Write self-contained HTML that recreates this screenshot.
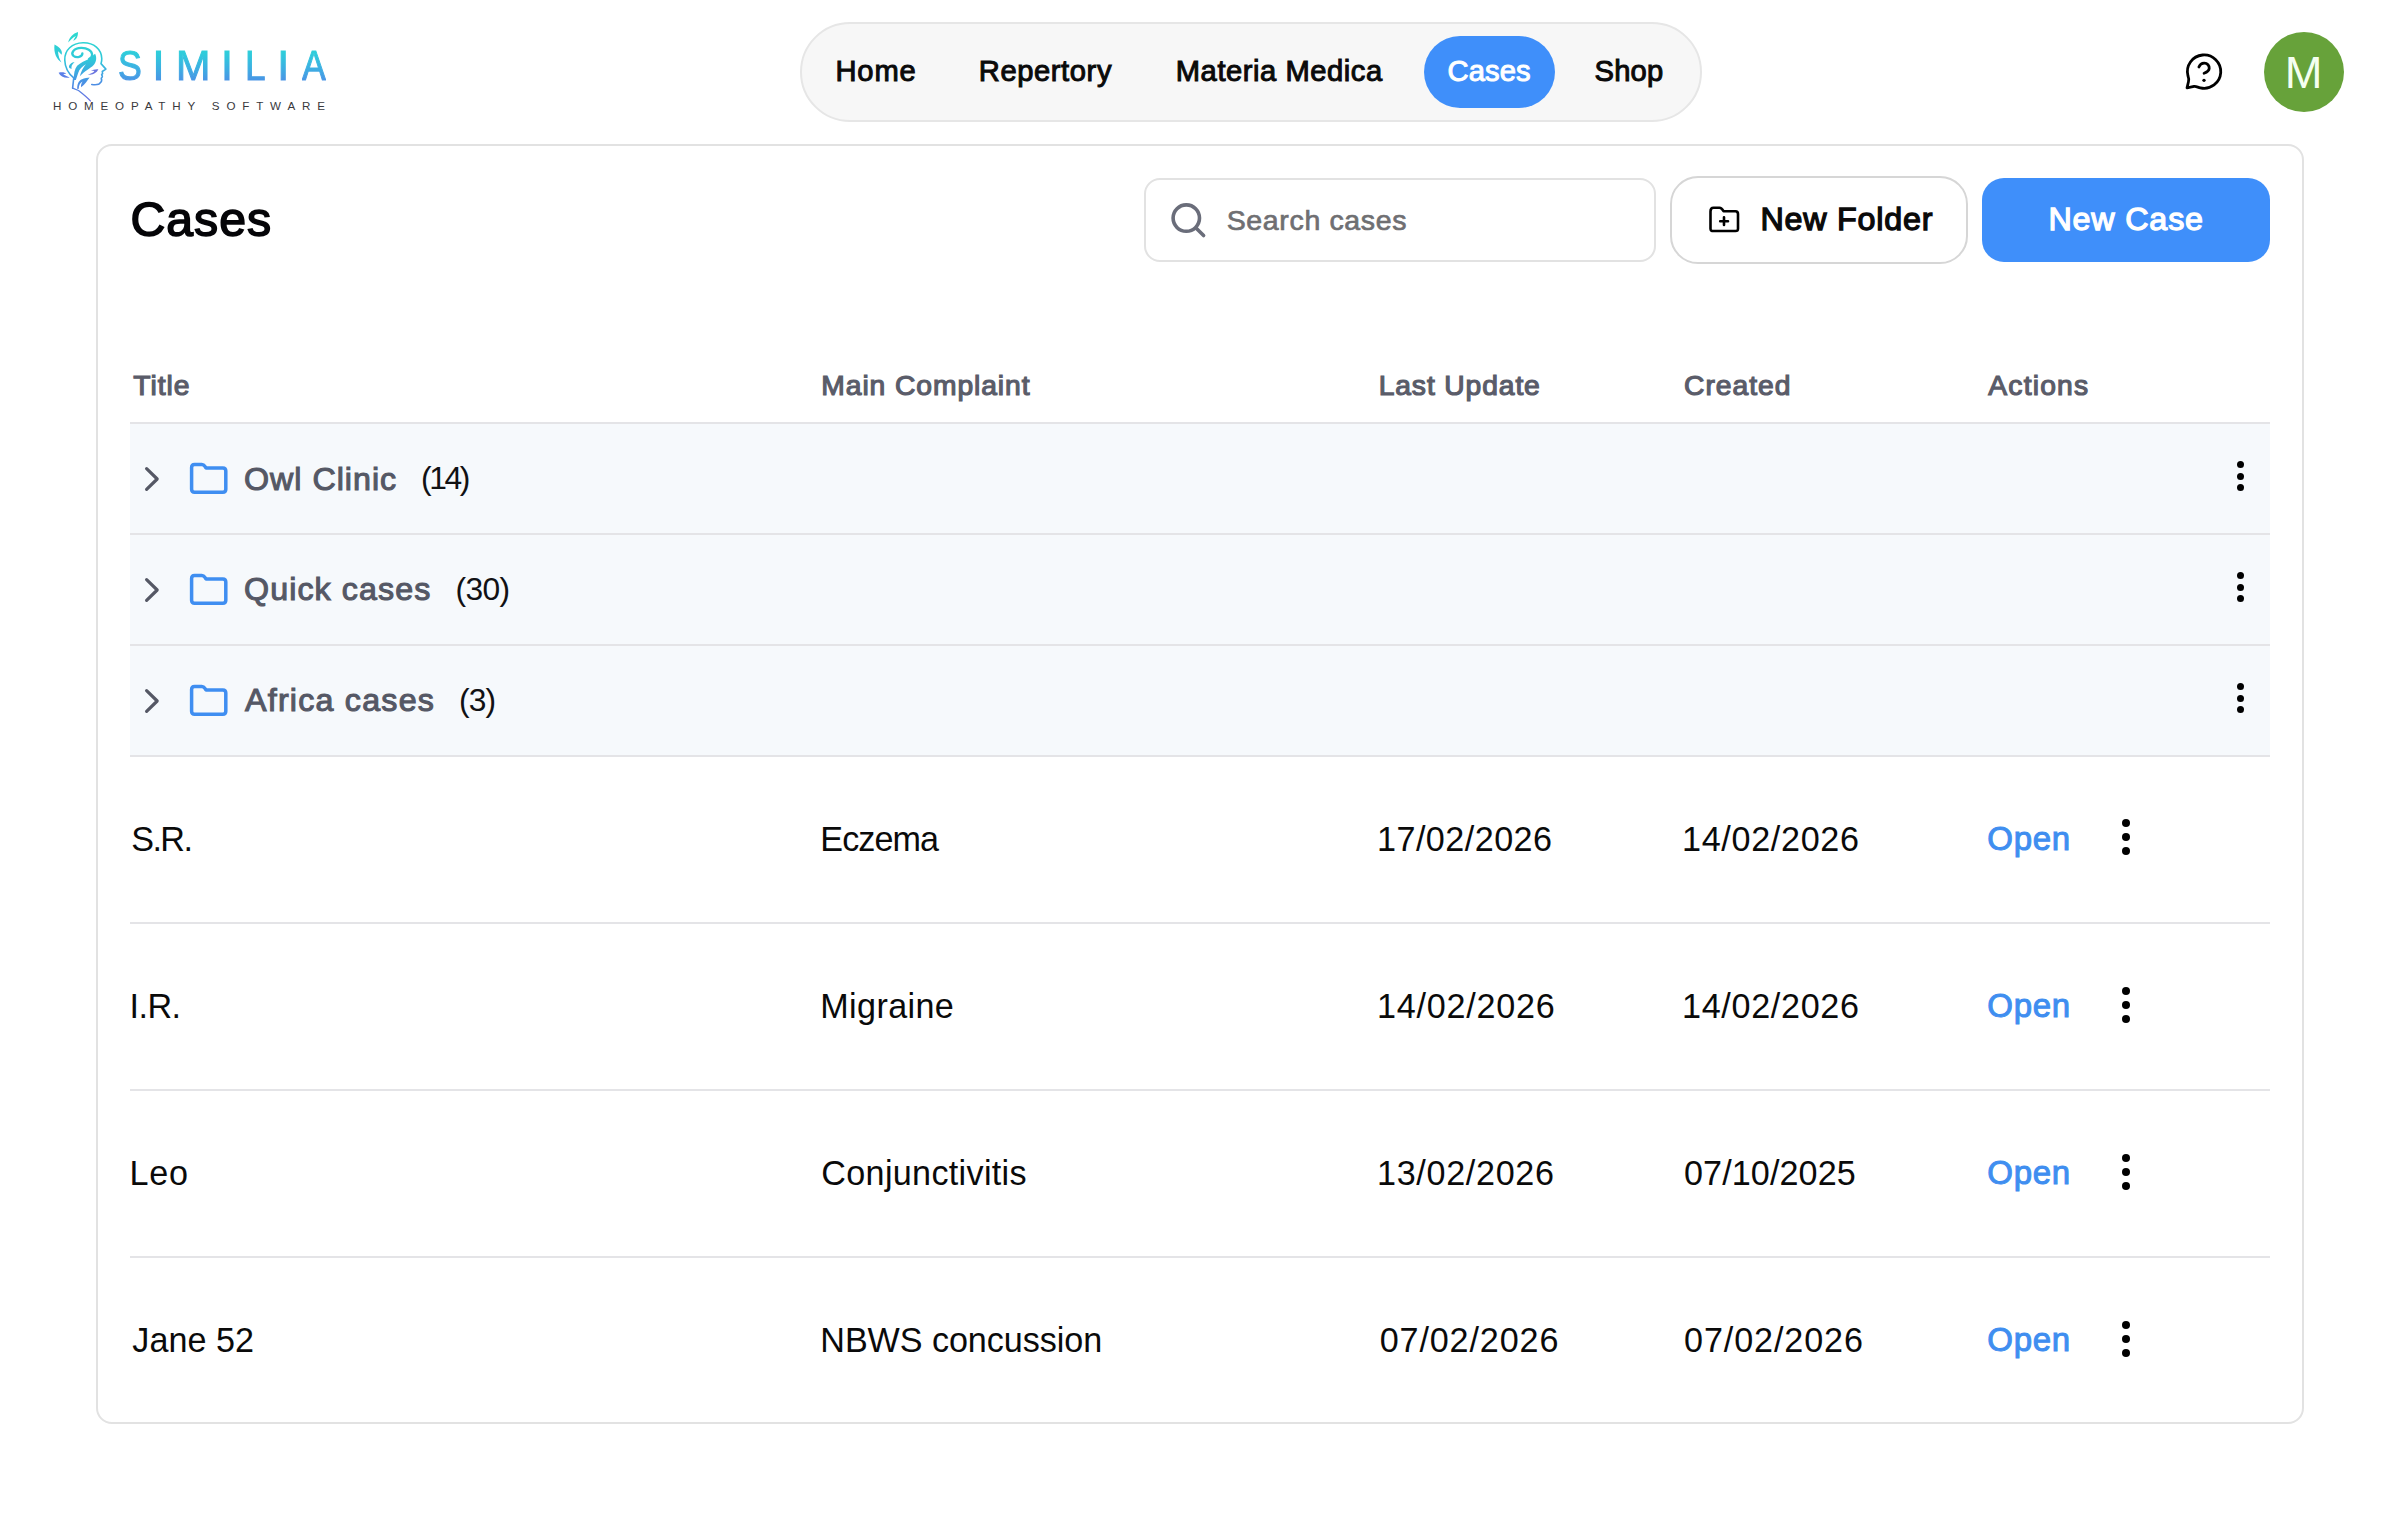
<!DOCTYPE html>
<html>
<head>
<meta charset="utf-8">
<style>
*{box-sizing:border-box;margin:0;padding:0}
html,body{width:2400px;height:1520px;overflow:hidden;background:#fff}
body{position:relative;font-family:"Liberation Sans",sans-serif;color:#0a0a0a}
.abs{position:absolute}
.t{position:absolute;white-space:nowrap;line-height:1}
#similia span{position:absolute;top:44px;font-size:43px;line-height:1;
  background:linear-gradient(180deg,#2ad6d6 0px,#2fcbdb 10px,#3cb0e2 24px,#4d8ce6 40px);-webkit-background-clip:text;background-clip:text;color:transparent;-webkit-text-stroke:1.1px transparent}
#tagline{left:53px;top:100px;font-size:11.6px;letter-spacing:6.83px;color:#38383c}
#nav{left:800px;top:22px;width:902px;height:100px;background:#f7f7f7;border:2px solid #e6e6e6;border-radius:50px}
#nav-active{left:1424px;top:36px;width:131px;height:72px;background:#3f8ffa;border-radius:36px}
#avatar{left:2264px;top:32px;width:80px;height:80px;border-radius:50%;background:#67a23a}
#card{left:96px;top:144px;width:2208px;height:1280px;border:2px solid #e2e2e2;border-radius:16px}
#search{left:1144px;top:178px;width:512px;height:84px;border:2px solid #e2e2e2;border-radius:16px}
#newfolder{left:1670px;top:176px;width:298px;height:88px;border:2px solid #d6d6d6;border-radius:28px}
#newcase{left:1982px;top:178px;width:288px;height:84px;background:#3f8ffa;border-radius:22px}
.hline{position:absolute;left:130px;width:2140px;height:2px;background:#e4e4e7}
.frow{position:absolute;left:130px;width:2140px;background:#f6f9fc}
.chev{position:absolute;left:140px;width:24px;height:30px}
.ficon{position:absolute;left:186px;width:44px;height:38px}
.dot{position:absolute;border-radius:50%;background:#000}
@media (max-width:1300px){html{zoom:0.5}}
</style>
</head>
<body>
<svg class="abs" style="left:48px;top:28px;width:64px;height:76px" viewBox="0 0 1280 1520">
<defs><linearGradient id="lg" x1="0" y1="80" x2="0" y2="1450" gradientUnits="userSpaceOnUse">
<stop offset="0" stop-color="#2cd9cf"/><stop offset="0.4" stop-color="#2fc8d9"/><stop offset="0.7" stop-color="#4596e4"/><stop offset="1" stop-color="#6a70e2"/></linearGradient></defs>
<g fill="url(#lg)">
<path d="M405 290 C420 190 500 110 600 80 C600 170 570 235 505 255 C530 205 545 180 560 160 C495 190 445 240 405 290Z"/>
<path d="M130 330 C255 390 300 480 270 535 C245 505 225 480 200 465 C205 560 235 640 270 690 C170 620 110 500 130 330Z"/>
<path d="M820 619 C852 598 878 577 894 556 L941 514 C978 582 973 672 909 745 C846 808 731 861 636 966 C662 872 699 793 757 724 C688 766 625 819 604 898 L557 1040 L515 1040 C515 924 531 819 583 756 C646 693 752 650 820 619Z"/>
<path d="M531 682 C478 687 415 729 420 787 C425 808 457 819 473 814 C462 777 473 735 531 682Z"/>
<path d="M587 1227 C577 1132 610 1046 681 1023 C729 1004 790 994 833 990 C790 1046 738 1132 662 1184 C653 1141 672 1094 696 1070 C648 1084 615 1141 615 1217Z"/>
</g>
<path fill="#5b7fe8" d="M212 893 C278 872 345 888 365 910 C330 916 310 922 302 926 C345 955 390 975 435 990 C345 1012 250 975 212 893Z"/>
<path fill="#6a74df" d="M796 926 C880 952 975 902 1008 826 C950 818 890 838 860 856 C890 854 915 857 928 864 C895 898 845 920 796 926Z"/>
<g fill="none" stroke="url(#lg)" stroke-linecap="round" stroke-linejoin="round">
<path stroke-width="32" d="M492 1203 L515 999 C430 930 340 800 335 640 C330 440 480 300 700 295 C920 290 1070 430 1075 610 C1078 660 1065 690 1060 712 L1158 822 L1085 870 C1100 900 1090 920 1072 935 C1092 960 1095 985 1065 1002 C1080 1040 1070 1080 1040 1100 C1030 1128 980 1140 875 1130"/>
<path stroke-width="26" d="M492 1203 L610 1250 C700 1320 790 1390 847 1459"/>
<path stroke-width="46" d="M688 506 C688 582 573 608 509 556 C452 503 509 403 662 398 C783 395 878 451 883 535 C886 577 852 603 820 619"/>
</g>
</svg>
<div id="similia"><span style="left:117.52px;transform:scaleX(0.83);transform-origin:0 0">S</span><span style="left:152.40px;transform:scaleX(1.0);transform-origin:0 0">I</span><span style="left:176.12px;transform:scaleX(0.96);transform-origin:0 0">M</span><span style="left:221.00px;transform:scaleX(1.0);transform-origin:0 0">I</span><span style="left:245.42px;transform:scaleX(0.86);transform-origin:0 0">L</span><span style="left:277.20px;transform:scaleX(1.0);transform-origin:0 0">I</span><span style="left:301.55px;transform:scaleX(0.83);transform-origin:0 0">A</span></div>
<div id="tagline" class="t">HOMEOPATHY SOFTWARE</div>

<div id="nav" class="abs"></div>
<div id="nav-active" class="abs"></div>

<svg class="abs" style="left:2180px;top:48px;width:48px;height:48px" viewBox="0 0 1520 1520" fill="none" stroke="#000" stroke-width="88" stroke-linecap="round" stroke-linejoin="round">
<path d="M 252 880 C 282 960, 288 1010, 268 1070 L 222 1262 L 445 1218 C 505 1206, 565 1246, 645 1262 A 528 528 0 1 0 252 880 Z"/>
<path d="M 598 600 C 632 515, 705 478, 770 480 C 868 484, 932 555, 925 648 C 918 730, 848 770, 762 800"/>
<circle cx="760" cy="1022" r="52" fill="#000" stroke="none"/>
</svg>
<div id="avatar" class="abs"></div>

<div id="card" class="abs"></div>
<div id="search" class="abs"></div>
<svg class="abs" style="left:1166px;top:198px;width:44px;height:44px" viewBox="0 0 44 44" fill="none" stroke="#6a6d7a" stroke-width="3.6" stroke-linecap="round">
<circle cx="20.3" cy="20.1" r="13.2"/><path d="M30 30 L37.6 37.6"/>
</svg>
<div id="newfolder" class="abs"></div>
<svg class="abs" style="left:1704px;top:202px;width:40px;height:34px" viewBox="0 0 40 34" fill="none" stroke="#000" stroke-width="2.6" stroke-linejoin="round" stroke-linecap="round">
<path d="M6.5 9.5 C6.5 6.5 7.5 5.8 9.5 5.8 L15.5 5.8 C17 5.8 18 6.5 19.5 9.200 L31.5 9.200 C33.500 9.200 34 10 34 12 L34 26.700 C34 28.700 33.500 29 31.500 29 L9.500 29 C7.500 29 6.500 28.700 6.500 26.700 Z"/>
<path d="M20 15.300 L20 23 M16.200 19.200 L24 19.200"/>
</svg>
<div id="newcase" class="abs"></div>

<div class="hline" style="top:422px"></div>
<div class="frow" style="top:424px;height:109px"></div>
<div class="hline" style="top:533px"></div>
<svg class="chev" style="top:463.5px" viewBox="0 0 24 30" fill="none" stroke="#555865" stroke-width="3.2" stroke-linecap="round" stroke-linejoin="round"><path d="M6.6 4.6 L17.2 15 L6.6 25.4"/></svg>
<svg class="ficon" style="top:460.3px" viewBox="0 0 44 38" fill="none" stroke="#3f8ef1" stroke-width="3.5" stroke-linejoin="round"><path d="M5.6 7.4 C5.600 5.400 6.600 4.400 8.600 4.400 L15.700 4.400 C17.200 4.400 18.100 5.000 19.000 6.400 L20.100 8.000 L36.800 8.000 C38.800 8.000 39.800 9.000 39.800 11.000 L39.800 29.300 C39.800 31.300 38.800 32.300 36.800 32.300 L8.600 32.300 C6.600 32.300 5.600 31.300 5.600 29.300 Z"/></svg>
<div class="dot" style="left:2236.5px;top:460.8px;width:7px;height:7px"></div>
<div class="dot" style="left:2236.5px;top:472.5px;width:7px;height:7px"></div>
<div class="dot" style="left:2236.5px;top:484.2px;width:7px;height:7px"></div>
<div class="frow" style="top:535px;height:109px"></div>
<div class="hline" style="top:644px"></div>
<svg class="chev" style="top:574.5px" viewBox="0 0 24 30" fill="none" stroke="#555865" stroke-width="3.2" stroke-linecap="round" stroke-linejoin="round"><path d="M6.6 4.6 L17.2 15 L6.6 25.4"/></svg>
<svg class="ficon" style="top:571.3px" viewBox="0 0 44 38" fill="none" stroke="#3f8ef1" stroke-width="3.5" stroke-linejoin="round"><path d="M5.6 7.4 C5.600 5.400 6.600 4.400 8.600 4.400 L15.700 4.400 C17.200 4.400 18.100 5.000 19.000 6.400 L20.100 8.000 L36.800 8.000 C38.800 8.000 39.800 9.000 39.800 11.000 L39.800 29.300 C39.800 31.300 38.800 32.300 36.800 32.300 L8.600 32.300 C6.600 32.300 5.600 31.300 5.600 29.300 Z"/></svg>
<div class="dot" style="left:2236.5px;top:571.8px;width:7px;height:7px"></div>
<div class="dot" style="left:2236.5px;top:583.5px;width:7px;height:7px"></div>
<div class="dot" style="left:2236.5px;top:595.2px;width:7px;height:7px"></div>
<div class="frow" style="top:646px;height:109px"></div>
<div class="hline" style="top:755px"></div>
<svg class="chev" style="top:685.5px" viewBox="0 0 24 30" fill="none" stroke="#555865" stroke-width="3.2" stroke-linecap="round" stroke-linejoin="round"><path d="M6.6 4.6 L17.2 15 L6.6 25.4"/></svg>
<svg class="ficon" style="top:682.3px" viewBox="0 0 44 38" fill="none" stroke="#3f8ef1" stroke-width="3.5" stroke-linejoin="round"><path d="M5.6 7.4 C5.600 5.400 6.600 4.400 8.600 4.400 L15.700 4.400 C17.200 4.400 18.100 5.000 19.000 6.400 L20.100 8.000 L36.800 8.000 C38.800 8.000 39.800 9.000 39.800 11.000 L39.800 29.300 C39.800 31.300 38.800 32.300 36.800 32.300 L8.600 32.300 C6.600 32.300 5.600 31.300 5.600 29.300 Z"/></svg>
<div class="dot" style="left:2236.5px;top:682.8px;width:7px;height:7px"></div>
<div class="dot" style="left:2236.5px;top:694.5px;width:7px;height:7px"></div>
<div class="dot" style="left:2236.5px;top:706.2px;width:7px;height:7px"></div>
<div class="hline" style="top:922px"></div>
<div class="hline" style="top:1089px"></div>
<div class="hline" style="top:1256px"></div>
<div class="dot" style="left:2122px;top:819.0px;width:8px;height:8px"></div>
<div class="dot" style="left:2122px;top:833.0px;width:8px;height:8px"></div>
<div class="dot" style="left:2122px;top:847.0px;width:8px;height:8px"></div>
<div class="dot" style="left:2122px;top:986.5px;width:8px;height:8px"></div>
<div class="dot" style="left:2122px;top:1000.5px;width:8px;height:8px"></div>
<div class="dot" style="left:2122px;top:1014.5px;width:8px;height:8px"></div>
<div class="dot" style="left:2122px;top:1153.5px;width:8px;height:8px"></div>
<div class="dot" style="left:2122px;top:1167.5px;width:8px;height:8px"></div>
<div class="dot" style="left:2122px;top:1181.5px;width:8px;height:8px"></div>
<div class="dot" style="left:2122px;top:1320.5px;width:8px;height:8px"></div>
<div class="dot" style="left:2122px;top:1334.5px;width:8px;height:8px"></div>
<div class="dot" style="left:2122px;top:1348.5px;width:8px;height:8px"></div>
<div class="t" style="left:835.5px;top:57px;font-size:29.15px;letter-spacing:0.83px;color:#0a0a0a;-webkit-text-stroke:1.0px #0a0a0a;">Home</div>
<div class="t" style="left:978.8px;top:57px;font-size:29.15px;letter-spacing:0.59px;color:#0a0a0a;-webkit-text-stroke:1.0px #0a0a0a;">Repertory</div>
<div class="t" style="left:1175.8px;top:57px;font-size:29.15px;letter-spacing:0.55px;color:#0a0a0a;-webkit-text-stroke:1.0px #0a0a0a;">Materia Medica</div>
<div class="t" style="left:1447.6px;top:57px;font-size:29.15px;letter-spacing:0.12px;color:#ffffff;-webkit-text-stroke:1.0px #ffffff;">Cases</div>
<div class="t" style="left:1594.5px;top:57px;font-size:29.15px;letter-spacing:0.20px;color:#0a0a0a;-webkit-text-stroke:1.0px #0a0a0a;">Shop</div>
<div class="t" style="left:130.4px;top:195px;font-size:48.23px;letter-spacing:1.00px;color:#050508;-webkit-text-stroke:1.6px #050508;">Cases</div>
<div class="t" style="left:1226.7px;top:206px;font-size:28.5px;letter-spacing:0.65px;color:#6f6f72;-webkit-text-stroke:0.7px #6f6f72;">Search cases</div>
<div class="t" style="left:1760.5px;top:203px;font-size:32.28px;letter-spacing:0.77px;color:#0a0a0a;-webkit-text-stroke:1.3px #0a0a0a;">New Folder</div>
<div class="t" style="left:2048.4px;top:203px;font-size:32.28px;letter-spacing:0.83px;color:#ffffff;-webkit-text-stroke:1.3px #ffffff;">New Case</div>
<div class="t" style="left:133.3px;top:371px;font-size:28.25px;letter-spacing:0.93px;color:#5a5c69;-webkit-text-stroke:1.2px #5a5c69;">Title</div>
<div class="t" style="left:821.3px;top:371px;font-size:28.25px;letter-spacing:0.92px;color:#5a5c69;-webkit-text-stroke:1.2px #5a5c69;">Main Complaint</div>
<div class="t" style="left:1378.7px;top:371px;font-size:28.25px;letter-spacing:0.88px;color:#5a5c69;-webkit-text-stroke:1.2px #5a5c69;">Last Update</div>
<div class="t" style="left:1684.0px;top:371px;font-size:28.25px;letter-spacing:0.98px;color:#5a5c69;-webkit-text-stroke:1.2px #5a5c69;">Created</div>
<div class="t" style="left:1988.3px;top:371px;font-size:28.25px;letter-spacing:1.20px;color:#5a5c69;-webkit-text-stroke:1.2px #5a5c69;">Actions</div>
<div class="t" style="left:244.0px;top:463px;font-size:32.21px;letter-spacing:1.00px;color:#555865;-webkit-text-stroke:1.1px #555865;">Owl Clinic</div>
<div class="t" style="left:244.0px;top:573px;font-size:32.21px;letter-spacing:1.10px;color:#555865;-webkit-text-stroke:1.1px #555865;">Quick cases</div>
<div class="t" style="left:245.0px;top:684px;font-size:32.21px;letter-spacing:1.23px;color:#555865;-webkit-text-stroke:1.1px #555865;">Africa cases</div>
<div class="t" style="left:421.0px;top:463px;font-size:31.76px;letter-spacing:-2.37px;color:#111114;">(14)</div>
<div class="t" style="left:455.5px;top:574px;font-size:31.76px;letter-spacing:-0.60px;color:#111114;">(30)</div>
<div class="t" style="left:459.0px;top:685px;font-size:31.76px;letter-spacing:-0.90px;color:#111114;">(3)</div>
<div class="t" style="left:131.3px;top:822px;font-size:34.15px;letter-spacing:-1.60px;color:#0a0a0a;">S.R.</div>
<div class="t" style="left:820.3px;top:822px;font-size:34.15px;letter-spacing:-0.94px;color:#0a0a0a;">Eczema</div>
<div class="t" style="left:1377.0px;top:822px;font-size:34.15px;letter-spacing:0.46px;color:#0a0a0a;">17/02/2026</div>
<div class="t" style="left:1682.0px;top:822px;font-size:34.15px;letter-spacing:0.68px;color:#0a0a0a;">14/02/2026</div>
<div class="t" style="left:1987.3px;top:822px;font-size:33px;letter-spacing:0.67px;color:#3f8ef0;-webkit-text-stroke:1.0px #3f8ef0;">Open</div>
<div class="t" style="left:129.5px;top:989px;font-size:34.15px;letter-spacing:-0.53px;color:#0a0a0a;">I.R.</div>
<div class="t" style="left:820.3px;top:989px;font-size:34.15px;letter-spacing:0.37px;color:#0a0a0a;">Migraine</div>
<div class="t" style="left:1377.0px;top:989px;font-size:34.15px;letter-spacing:0.77px;color:#0a0a0a;">14/02/2026</div>
<div class="t" style="left:1682.0px;top:989px;font-size:34.15px;letter-spacing:0.68px;color:#0a0a0a;">14/02/2026</div>
<div class="t" style="left:1987.3px;top:989px;font-size:33px;letter-spacing:0.67px;color:#3f8ef0;-webkit-text-stroke:1.0px #3f8ef0;">Open</div>
<div class="t" style="left:129.5px;top:1156px;font-size:34.15px;letter-spacing:0.80px;color:#0a0a0a;">Leo</div>
<div class="t" style="left:821.3px;top:1156px;font-size:34.15px;letter-spacing:0.32px;color:#0a0a0a;">Conjunctivitis</div>
<div class="t" style="left:1377.0px;top:1156px;font-size:34.15px;letter-spacing:0.68px;color:#0a0a0a;">13/02/2026</div>
<div class="t" style="left:1684.0px;top:1156px;font-size:34.15px;letter-spacing:0.10px;color:#0a0a0a;">07/10/2025</div>
<div class="t" style="left:1987.3px;top:1156px;font-size:33px;letter-spacing:0.67px;color:#3f8ef0;-webkit-text-stroke:1.0px #3f8ef0;">Open</div>
<div class="t" style="left:132.3px;top:1323px;font-size:34.15px;letter-spacing:0.02px;color:#0a0a0a;">Jane 52</div>
<div class="t" style="left:820.3px;top:1323px;font-size:34.15px;letter-spacing:-0.06px;color:#0a0a0a;">NBWS concussion</div>
<div class="t" style="left:1379.7px;top:1323px;font-size:34.15px;letter-spacing:0.87px;color:#0a0a0a;">07/02/2026</div>
<div class="t" style="left:1684.0px;top:1323px;font-size:34.15px;letter-spacing:0.90px;color:#0a0a0a;">07/02/2026</div>
<div class="t" style="left:1987.3px;top:1323px;font-size:33px;letter-spacing:0.67px;color:#3f8ef0;-webkit-text-stroke:1.0px #3f8ef0;">Open</div>
<div class="t" style="left:2284.8px;top:50px;font-size:45.29px;letter-spacing:0.00px;color:#f4fff0;">M</div>
</body>
</html>
